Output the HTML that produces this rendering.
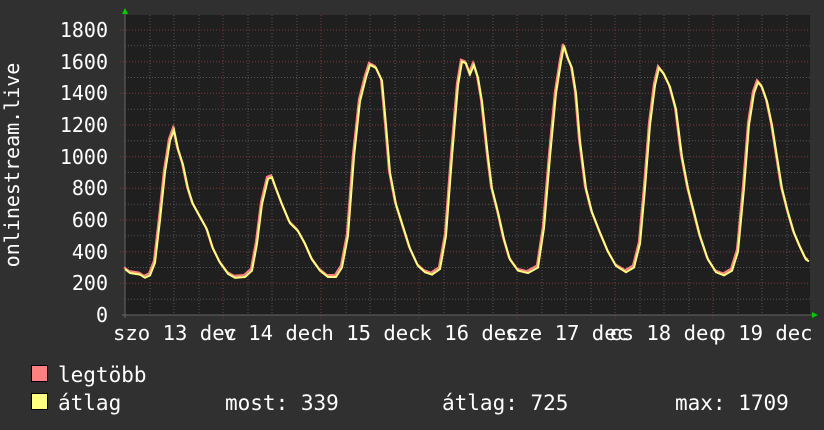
<!DOCTYPE html>
<html><head><meta charset="utf-8"><style>
html,body{margin:0;padding:0;background:#303030;}
svg{display:block}
text{font-family:"DejaVu Sans Mono","Liberation Mono",monospace;fill:#fff;}
</style></head><body>
<svg width="824" height="430" viewBox="0 0 824 430" xmlns="http://www.w3.org/2000/svg">
<rect width="824" height="430" fill="#303030"/>
<rect x="125" y="15" width="685" height="300" fill="#1f1f1f"/>
<g stroke="#555" stroke-width="1" stroke-dasharray="1,2">
<line x1="125" x2="810" y1="299.2" y2="299.2"/><line x1="125" x2="810" y1="267.5" y2="267.5"/><line x1="125" x2="810" y1="235.8" y2="235.8"/><line x1="125" x2="810" y1="204.2" y2="204.2"/><line x1="125" x2="810" y1="172.5" y2="172.5"/><line x1="125" x2="810" y1="140.8" y2="140.8"/><line x1="125" x2="810" y1="109.2" y2="109.2"/><line x1="125" x2="810" y1="77.5" y2="77.5"/><line x1="125" x2="810" y1="45.8" y2="45.8"/>
<line y1="15" y2="315" x1="150" x2="150"/><line y1="15" y2="315" x1="174" x2="174"/><line y1="15" y2="315" x1="199" x2="199"/>
<line y1="15" y2="315" x1="248" x2="248"/><line y1="15" y2="315" x1="272" x2="272"/><line y1="15" y2="315" x1="297" x2="297"/>
<line y1="15" y2="315" x1="346" x2="346"/><line y1="15" y2="315" x1="370" x2="370"/><line y1="15" y2="315" x1="395" x2="395"/>
<line y1="15" y2="315" x1="444" x2="444"/><line y1="15" y2="315" x1="468" x2="468"/><line y1="15" y2="315" x1="493" x2="493"/>
<line y1="15" y2="315" x1="542" x2="542"/><line y1="15" y2="315" x1="566" x2="566"/><line y1="15" y2="315" x1="591" x2="591"/>
<line y1="15" y2="315" x1="640" x2="640"/><line y1="15" y2="315" x1="664" x2="664"/><line y1="15" y2="315" x1="689" x2="689"/>
<line y1="15" y2="315" x1="738" x2="738"/><line y1="15" y2="315" x1="762" x2="762"/><line y1="15" y2="315" x1="787" x2="787"/>
</g>
<g stroke="#7a3a3a" stroke-width="1" stroke-dasharray="1,2">
<line x1="120" x2="810" y1="283.3" y2="283.3"/><line x1="120" x2="810" y1="220" y2="220"/><line x1="120" x2="810" y1="156.7" y2="156.7"/><line x1="120" x2="810" y1="93.3" y2="93.3"/><line x1="120" x2="810" y1="30" y2="30"/><line x1="120" x2="810" y1="251.7" y2="251.7"/><line x1="120" x2="810" y1="188.3" y2="188.3"/><line x1="120" x2="810" y1="125" y2="125"/><line x1="120" x2="810" y1="61.7" y2="61.7"/>
<line y1="15" y2="320" x1="223" x2="223"/><line y1="15" y2="320" x1="321" x2="321"/><line y1="15" y2="320" x1="419" x2="419"/><line y1="15" y2="320" x1="517" x2="517"/><line y1="15" y2="320" x1="615" x2="615"/><line y1="15" y2="320" x1="713" x2="713"/>
</g>
<line x1="125" y1="12" x2="125" y2="318" stroke="#666"/>
<line x1="122" y1="315" x2="812" y2="315" stroke="#666"/>
<polygon points="122,14 128,14 125,8" fill="#0c0"/>
<polygon points="812,312 812,318 818,315" fill="#0c0"/>
<g transform="translate(0,315) scale(1,-0.15833)">
<polyline fill="none" stroke="#ff8080" stroke-width="2.2" vector-effect="non-scaling-stroke" transform="translate(-1,12)" points="125,290 130,265 140,255 145,235 150,250 155,330 160,600 165,900 170,1100 174,1170 178,1050 183,950 188,800 193,700 200,620 207,540 213,420 220,330 228,260 235,235 245,240 252,280 257,450 262,700 268,860 272,870 276,800 282,700 290,580 298,530 305,450 312,350 320,280 328,240 336,240 342,300 348,500 354,1000 360,1350 366,1500 370,1580 376,1560 382,1480 386,1200 390,900 396,700 402,580 410,420 418,310 425,270 432,255 440,290 446,500 452,1000 458,1450 462,1600 466,1590 470,1520 474,1580 478,1500 482,1350 488,1000 492,800 498,650 504,480 510,350 518,280 528,265 538,300 544,550 550,1000 556,1400 561,1600 564,1700 568,1620 572,1560 576,1400 580,1100 586,800 592,650 600,520 608,400 616,310 626,270 634,300 640,450 645,800 650,1200 655,1450 659,1560 664,1520 670,1440 676,1300 682,1000 688,800 694,650 700,500 708,350 716,270 724,250 732,280 738,400 744,800 749,1200 754,1400 758,1470 762,1440 767,1350 772,1200 777,1000 782,800 788,650 794,520 800,430 806,350 809,339"/>
<polyline fill="none" stroke="#ffff80" stroke-width="2" vector-effect="non-scaling-stroke" points="125,290 130,265 140,255 145,235 150,250 155,330 160,600 165,900 170,1100 174,1170 178,1050 183,950 188,800 193,700 200,620 207,540 213,420 220,330 228,260 235,235 245,240 252,280 257,450 262,700 268,860 272,870 276,800 282,700 290,580 298,530 305,450 312,350 320,280 328,240 336,240 342,300 348,500 354,1000 360,1350 366,1500 370,1580 376,1560 382,1480 386,1200 390,900 396,700 402,580 410,420 418,310 425,270 432,255 440,290 446,500 452,1000 458,1450 462,1600 466,1590 470,1520 474,1580 478,1500 482,1350 488,1000 492,800 498,650 504,480 510,350 518,280 528,265 538,300 544,550 550,1000 556,1400 561,1600 564,1700 568,1620 572,1560 576,1400 580,1100 586,800 592,650 600,520 608,400 616,310 626,270 634,300 640,450 645,800 650,1200 655,1450 659,1560 664,1520 670,1440 676,1300 682,1000 688,800 694,650 700,500 708,350 716,270 724,250 732,280 738,400 744,800 749,1200 754,1400 758,1470 762,1440 767,1350 772,1200 777,1000 782,800 788,650 794,520 800,430 806,350 809,339"/>
</g>
<g font-size="20" text-anchor="end">
<text x="108" y="37">1800</text><text x="108" y="69">1600</text><text x="108" y="100">1400</text><text x="108" y="132">1200</text><text x="108" y="164">1000</text><text x="108" y="195">800</text><text x="108" y="227">600</text><text x="108" y="259">400</text><text x="108" y="290">200</text><text x="108" y="322">0</text>
</g>
<text font-size="20" transform="translate(19,165) rotate(-90)" text-anchor="middle">onlinestream.live</text>
<g font-size="20.6" text-anchor="middle">
<text x="175" y="340">szo 13 dec</text><text x="273" y="340">v 14 dec</text><text x="371" y="340">h 15 dec</text><text x="469" y="340">k 16 dec</text><text x="567" y="340">sze 17 dec</text><text x="665" y="340">cs 18 dec</text><text x="763" y="340">p 19 dec</text>
</g>
<rect x="31.5" y="365.5" width="16" height="16" fill="#ff8080" stroke="#000"/>
<rect x="31.5" y="393.5" width="16" height="16" fill="#ffff80" stroke="#000"/>
<g font-size="21">
<text x="58" y="382">legtöbb</text>
<text x="58" y="410">átlag</text>
<text x="225" y="410">most: 339</text>
<text x="442" y="410">átlag: 725</text>
<text x="675" y="410">max: 1709</text>
</g>
</svg>
</body></html>
